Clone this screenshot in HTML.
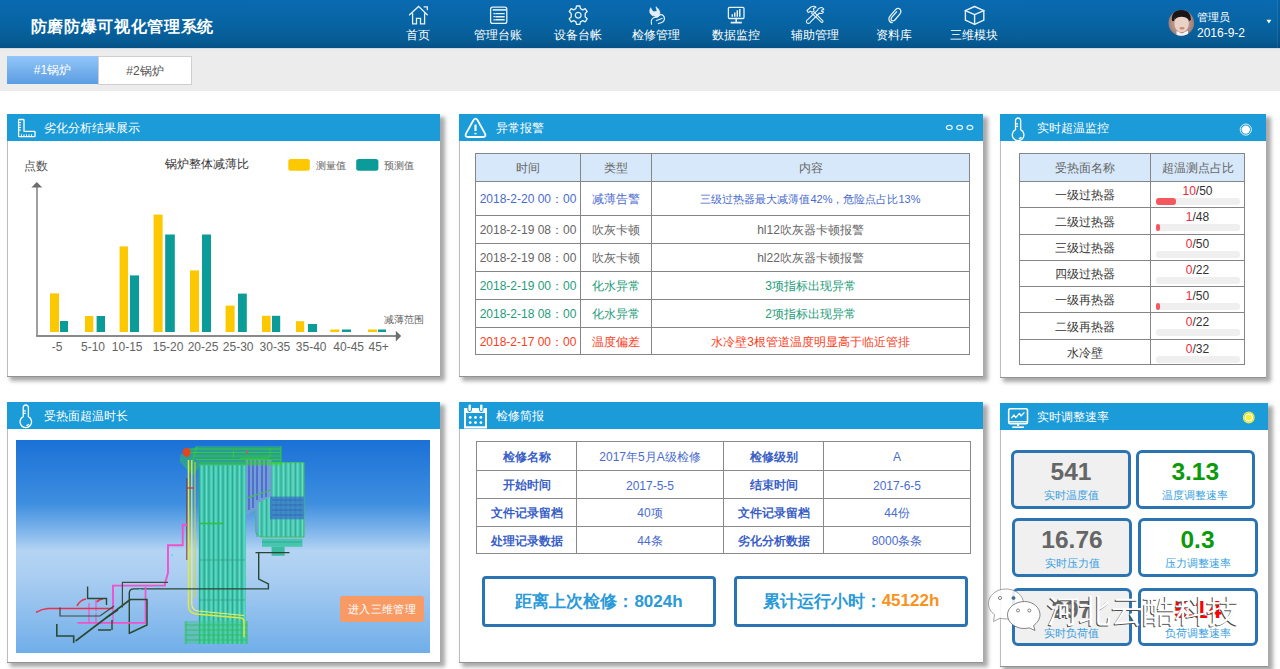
<!DOCTYPE html>
<html><head><meta charset="utf-8">
<style>
*{margin:0;padding:0;box-sizing:border-box}
html,body{width:1280px;height:669px;overflow:hidden;background:#fff;font-family:"Liberation Sans",sans-serif;}
.abs{position:absolute}
#hdr{position:absolute;left:0;top:0;width:1280px;height:48px;background:linear-gradient(#0a6ab0,#0764a3 50%,#075b93 85%,#065089);}
#title{position:absolute;left:30.5px;top:15px;font-size:16px;font-weight:bold;color:#fff;line-height:24px;letter-spacing:0.7px}
.nav{position:absolute;top:0;height:48px;width:80px;text-align:center;color:#fff;font-size:12px}
.nav svg{position:absolute;left:0;top:0}
.nav span{position:absolute;left:0;width:100%;top:27px;line-height:16px;white-space:nowrap}
#bar{position:absolute;left:0;top:48px;width:1280px;height:43px;background:#ececec;border-top:1px solid #d2dbe3}
.tab{position:absolute;top:56px;height:28px;font-size:12px;line-height:29px;text-align:center}
.panel{position:absolute;background:#fff;box-shadow:inset 1px 0 0 #bdbdbd,0 1px 0 #929292,4px 4px 4px 1px rgba(0,0,0,.34)}
.ph{position:absolute;left:0;top:0;width:100%;height:27px;background:#1b9bd7;color:#fff;font-size:12px;line-height:27px}
.ph .t{position:absolute;left:37px;top:1px}
.ph svg{position:absolute;left:0;top:0}
.cell{position:absolute;display:flex;align-items:center;justify-content:center;white-space:nowrap;font-size:12px;padding-top:2px}
</style></head><body>
<div id="hdr"></div>
<div id="title">防磨防爆可视化管理系统</div>
<svg class="abs" style="left:0;top:0" width="1280" height="48" viewBox="0 0 1280 48" fill="none" stroke="#e8f1f8" stroke-width="1.3" stroke-linecap="square">
 <!-- home -->
 <path d="M409.6 14.8 L418.6 6.4 L427.2 14.8 M412.6 14 V23.8 H416.5 V18.3 H420.5 V23.8 H424.6 V14 M424.3 6.8 H427.3 V9.6"/>
 <!-- ledger -->
 <rect x="490.6" y="7.2" width="16.2" height="16.2" rx="2"/>
 <path d="M493.5 9.9 H505.5" stroke-width="1.6"/>
 <path d="M496.2 13.6 H504 M496.2 16.7 H504 M496.2 19.8 H504" stroke-width="1.4"/>
 <path d="M494 13.6 h.8 M494 16.7 h.8 M494 19.8 h.8" stroke-width="1.2"/>
 <!-- gear -->
 <g transform="translate(578.2 15.2)">
  <path d="M-1.7 -9.2 L1.7 -9.2 L2.3 -6.6 L4.6 -5.4 L7.0 -6.6 L9.0 -3.6 L7.0 -1.8 L7.0 1.8 L9.0 3.6 L7.0 6.6 L4.6 5.4 L2.3 6.6 L1.7 9.2 L-1.7 9.2 L-2.3 6.6 L-4.6 5.4 L-7.0 6.6 L-9.0 3.6 L-7.0 1.8 L-7.0 -1.8 L-9.0 -3.6 L-7.0 -6.6 L-4.6 -5.4 L-2.3 -6.6 Z" stroke-linejoin="round"/>
  <circle r="2.9"/>
 </g>
 <!-- wrench hand -->
 <g stroke="#e4eef6">
  <path d="M650.5 8.2 C648.5 12 650.5 15.5 654.5 16 L657.2 17.5 L659.5 15.8 C660.5 12.5 659.5 9.5 656 6.8 L657 10.5 C656 12.2 653.8 12.2 652.5 11 Z" fill="#e4eef6" stroke-width="0.8"/>
  <path d="M651.5 24 C650.5 20 652 17.5 656 17.2 L660 14.8 C663 14.2 664.5 16.5 664.5 19 C664.3 21 662 22.8 658.5 23.5 M656.5 20.5 L662 18.5" stroke-width="1.2"/>
 </g>
 <!-- monitor -->
 <rect x="728.4" y="7.3" width="15.6" height="11.2" rx="1.2"/>
 <path d="M736.2 18.5 V21.5 M731.5 22.6 H741" stroke-width="1.6"/>
 <path d="M732.3 16 V15 M734.8 16 V13.3 M737.3 16 V11 M739.8 16 V9.8" stroke-width="1.5"/>
 <!-- tools -->
 <g stroke-width="1.1" stroke-linejoin="round">
  <path d="M807 10.5 L811 7 C812.8 6.2 815 6.2 816 7.2 L813.5 8.6 L814 10.8 L812.3 12.2 L810.4 11.2 L808.2 12.6 Z"/>
  <path d="M813.8 11.8 L818 16 L822.8 20.8 C823.4 21.6 822.6 22.8 821.6 22.4 L816 17.2 L811.6 13.2"/>
  <path d="M819.6 8 C821.4 6.8 823.6 7.8 823.8 9.6 L822 9.8 L821.6 11.4 L823.6 12 C822.6 13.6 820.6 14 819.4 13 L810.6 21.8 C810.2 23.4 808 23.8 806.8 22.8 C806 21.4 806.6 19.6 808.2 19.2 L817.6 10.2 C817.6 9.4 818.6 8.4 819.6 8 Z"/>
 </g>
 <!-- paperclip -->
 <path d="M896.5 11.8 L891.5 17.6 C890.4 19 891.2 20.8 892.8 20.9 C893.6 21 894.4 20.6 894.9 20 L900.2 13.6 C901.6 11.8 900.8 8.6 898.4 8.4 C897.2 8.3 896.2 8.9 895.6 9.6 L889.8 16.4 C888 18.6 888.8 22.4 892.2 22.6" stroke-linecap="round"/>
 <!-- cube -->
 <g stroke-width="1.4" stroke-linejoin="round">
  <path d="M974.6 6.5 L983.8 10.6 V20.2 L974.6 24.3 L965.4 20.2 V10.6 Z"/>
  <path d="M965.4 10.6 L974.6 14.6 L983.8 10.6 M974.6 14.6 V24.3"/>
 </g>
 <!-- triangle -->
 <path d="M1266.4 19.8 H1271.4 L1268.9 23.6 Z" fill="#fff" stroke="none"/>
</svg>
<div class="nav" style="left:378px"><span>首页</span></div>
<div class="nav" style="left:458px"><span>管理台账</span></div>
<div class="nav" style="left:537.5px"><span>设备台帐</span></div>
<div class="nav" style="left:616px"><span>检修管理</span></div>
<div class="nav" style="left:696px"><span>数据监控</span></div>
<div class="nav" style="left:774.7px"><span>辅助管理</span></div>
<div class="nav" style="left:854px"><span>资料库</span></div>
<div class="nav" style="left:933.5px"><span>三维模块</span></div>
<svg class="abs" style="left:1164px;top:6px" width="34" height="34" viewBox="1164 6 34 34">
 <defs><clipPath id="avc"><circle cx="1181.3" cy="22.9" r="12.8"/></clipPath>
 <radialGradient id="avbg" cx=".5" cy=".5" r=".5"><stop offset=".5" stop-color="#b8948a"/><stop offset="1" stop-color="#7e6660"/></radialGradient></defs>
 <g clip-path="url(#avc)">
  <rect x="1164" y="6" width="34" height="34" fill="url(#avbg)"/>
  <path d="M1172 21 Q1171 10 1181 9.5 Q1191 10 1191 20 L1189 21 Q1188 15 1181 15 Q1174.5 15 1174 21 Z" fill="#1a1618"/>
  <ellipse cx="1181.6" cy="23.6" rx="7.2" ry="8.6" fill="#ead2c6"/>
  <path d="M1174.5 20 Q1175 14.6 1181.5 14.6 Q1188.5 14.6 1189 20 Q1186 16.8 1181.5 16.8 Q1177 16.8 1174.5 20 Z" fill="#1a1618"/>
  <ellipse cx="1182" cy="28.2" rx="2.6" ry="1.2" fill="#c98a80"/>
  <path d="M1176.5 31 L1182 33.5 L1188 30.5 V40 H1176.5 Z" fill="#f4f6f8"/>
 </g>
</svg>
<div class="abs" style="left:1197px;top:10px;font-size:11px;line-height:14px;color:#fff">管理员</div>
<div class="abs" style="left:1197px;top:26px;font-size:12px;line-height:14px;color:#fff">2016-9-2</div>
<div class="abs" style="left:1277px;top:0;width:1px;height:48px;background:rgba(255,255,255,.08)"></div><div class="abs" style="left:1278px;top:0;width:2px;height:48px;background:rgba(0,0,0,.06)"></div>

<div id="bar"></div>
<div class="tab" style="left:7px;width:91px;background:linear-gradient(#92c6f9,#5b9de2);color:#fff">#1锅炉</div>
<div class="tab" style="left:98px;width:94px;height:29px;background:#fff;border:1px solid #cfcfcf;color:#555">#2锅炉</div>

<!-- panels -->
<div class="panel" style="left:7px;top:114px;width:433px;height:262px">
  <div class="ph"><span class="t">劣化分析结果展示</span></div>
</div>
<div class="panel" style="left:459px;top:114px;width:524px;height:262px">
  <div class="ph"><span class="t">异常报警</span></div>
</div>
<div class="panel" style="left:1000px;top:114px;width:266px;height:263px">
  <div class="ph"><span class="t">实时超温监控</span></div>
</div>
<div class="panel" style="left:7px;top:402px;width:433px;height:260px">
  <div class="ph"><span class="t">受热面超温时长</span></div>
</div>
<div class="panel" style="left:459px;top:402px;width:524px;height:260px">
  <div class="ph"><span class="t">检修简报</span></div>
</div>
<div class="panel" style="left:1000px;top:403px;width:268px;height:263px">
  <div class="ph"><span class="t">实时调整速率</span></div>
</div>
<svg class="abs" style="left:7px;top:141px" width="433" height="235" viewBox="7 141 433 235" font-family="Liberation Sans, sans-serif">
 <g font-size="12" fill="#555"><text x="23.5" y="170">点数</text></g>
 <text x="165" y="168" font-size="12" fill="#333">锅炉整体减薄比</text>
 <rect x="288.3" y="158.9" width="21.5" height="11.8" rx="2.5" fill="#fcc800"/>
 <rect x="356.2" y="158.9" width="22.2" height="11.8" rx="2.5" fill="#0b9b98"/>
 <g font-size="10" fill="#666"><text x="316" y="168.5">测量值</text><text x="383.6" y="168.5">预测值</text></g>
 <path d="M37 187 V336" stroke="#888" stroke-width="1.6"/>
 <path d="M36.8 182 L42.2 187.6 L31.4 187.6 Z" fill="#6d6d6d"/>
 <path d="M36.2 335.9 H396" stroke="#8a8a8a" stroke-width="2"/>
 <path d="M401.2 336 L395.8 330.8 V341.4 Z" fill="#6d6d6d"/>
 <rect x="50" y="293.4" width="9" height="38.6" fill="#fcc800"/>
 <rect x="60" y="321" width="8" height="11.0" fill="#0b9b98"/>
 <rect x="85" y="316" width="8.3" height="16.0" fill="#fcc800"/>
 <rect x="96.6" y="316" width="8.4" height="16.0" fill="#0b9b98"/>
 <rect x="119.6" y="246.4" width="8.4" height="85.6" fill="#fcc800"/>
 <rect x="130" y="275.4" width="9" height="56.6" fill="#0b9b98"/>
 <rect x="153.6" y="214.6" width="9" height="117.4" fill="#fcc800"/>
 <rect x="165.2" y="234.5" width="9.6" height="97.5" fill="#0b9b98"/>
 <rect x="190" y="270.4" width="9" height="61.6" fill="#fcc800"/>
 <rect x="202" y="234.5" width="9" height="97.5" fill="#0b9b98"/>
 <rect x="225.6" y="305.6" width="9" height="26.4" fill="#fcc800"/>
 <rect x="238" y="293.6" width="8.8" height="38.4" fill="#0b9b98"/>
 <rect x="262" y="315.8" width="8.6" height="16.2" fill="#fcc800"/>
 <rect x="272" y="315.8" width="8.2" height="16.2" fill="#0b9b98"/>
 <rect x="296" y="321.2" width="8.2" height="10.8" fill="#fcc800"/>
 <rect x="308" y="324" width="9" height="8.0" fill="#0b9b98"/>
 <rect x="330.3" y="329.5" width="9" height="2.5" fill="#fcc800"/>
 <rect x="342" y="329.5" width="9" height="2.5" fill="#0b9b98"/>
 <rect x="368" y="329.5" width="9" height="2.5" fill="#fcc800"/>
 <rect x="378" y="329.5" width="8" height="2.5" fill="#0b9b98"/>
 <g font-size="12" fill="#646464">
 <text x="57.2" y="350.8" text-anchor="middle">-5</text>
 <text x="93" y="350.8" text-anchor="middle">5-10</text>
 <text x="127.2" y="350.8" text-anchor="middle">10-15</text>
 <text x="168.1" y="350.8" text-anchor="middle">15-20</text>
 <text x="203" y="350.8" text-anchor="middle">20-25</text>
 <text x="238.2" y="350.8" text-anchor="middle">25-30</text>
 <text x="274.9" y="350.8" text-anchor="middle">30-35</text>
 <text x="311.2" y="350.8" text-anchor="middle">35-40</text>
 <text x="348.7" y="350.8" text-anchor="middle">40-45</text>
 <text x="378.7" y="350.8" text-anchor="middle">45+</text>
 </g>
 <text x="384.3" y="322.5" font-size="10" fill="#666">减薄范围</text>
</svg>
<!--P1END-->
<div class="abs" style="left:475px;top:153px;width:494px;height:28px;background:#d6e8f9"></div>
<div class="abs" style="left:475px;top:153px;width:495px;height:1px;background:#858585"></div>
<div class="abs" style="left:475px;top:181px;width:495px;height:1px;background:#858585"></div>
<div class="abs" style="left:475px;top:215px;width:495px;height:1px;background:#858585"></div>
<div class="abs" style="left:475px;top:243px;width:495px;height:1px;background:#858585"></div>
<div class="abs" style="left:475px;top:271px;width:495px;height:1px;background:#858585"></div>
<div class="abs" style="left:475px;top:299px;width:495px;height:1px;background:#858585"></div>
<div class="abs" style="left:475px;top:327px;width:495px;height:1px;background:#858585"></div>
<div class="abs" style="left:475px;top:354px;width:495px;height:1px;background:#858585"></div>
<div class="abs" style="left:475px;top:153px;width:1px;height:202px;background:#858585"></div>
<div class="abs" style="left:580px;top:153px;width:1px;height:202px;background:#858585"></div>
<div class="abs" style="left:651px;top:153px;width:1px;height:202px;background:#858585"></div>
<div class="abs" style="left:969px;top:153px;width:1px;height:202px;background:#858585"></div>
<div class="cell" style="left:476px;top:154px;width:104px;height:27px;color:#666">时间</div>
<div class="cell" style="left:581px;top:154px;width:70px;height:27px;color:#666">类型</div>
<div class="cell" style="left:652px;top:154px;width:317px;height:27px;color:#666">内容</div>
<div class="cell" style="left:476px;top:182px;width:104px;height:33px;color:#4a6bcf">2018-2-20 00：00</div>
<div class="cell" style="left:581px;top:182px;width:70px;height:33px;color:#4a6bcf">减薄告警</div>
<div class="cell" style="left:652px;top:182px;width:317px;height:33px;color:#4a6bcf;font-size:11px">三级过热器最大减薄值42%，危险点占比13%</div>
<div class="cell" style="left:476px;top:216px;width:104px;height:27px;color:#666">2018-2-19 08：00</div>
<div class="cell" style="left:581px;top:216px;width:70px;height:27px;color:#666">吹灰卡顿</div>
<div class="cell" style="left:652px;top:216px;width:317px;height:27px;color:#666;">hl12吹灰器卡顿报警</div>
<div class="cell" style="left:476px;top:244px;width:104px;height:27px;color:#666">2018-2-19 08：00</div>
<div class="cell" style="left:581px;top:244px;width:70px;height:27px;color:#666">吹灰卡顿</div>
<div class="cell" style="left:652px;top:244px;width:317px;height:27px;color:#666;">hl22吹灰器卡顿报警</div>
<div class="cell" style="left:476px;top:272px;width:104px;height:27px;color:#1f9c7a">2018-2-19 00：00</div>
<div class="cell" style="left:581px;top:272px;width:70px;height:27px;color:#1f9c7a">化水异常</div>
<div class="cell" style="left:652px;top:272px;width:317px;height:27px;color:#1f9c7a;">3项指标出现异常</div>
<div class="cell" style="left:476px;top:300px;width:104px;height:27px;color:#1f9c7a">2018-2-18 08：00</div>
<div class="cell" style="left:581px;top:300px;width:70px;height:27px;color:#1f9c7a">化水异常</div>
<div class="cell" style="left:652px;top:300px;width:317px;height:27px;color:#1f9c7a;">2项指标出现异常</div>
<div class="cell" style="left:476px;top:328px;width:104px;height:26px;color:#fb3d22">2018-2-17 00：00</div>
<div class="cell" style="left:581px;top:328px;width:70px;height:26px;color:#fb3d22">温度偏差</div>
<div class="cell" style="left:652px;top:328px;width:317px;height:26px;color:#fb3d22;">水冷壁3根管道温度明显高于临近管排</div>
<svg class="abs" style="left:940px;top:120px" width="40" height="16" viewBox="940 120 40 16" fill="none" stroke="#dff0fa" stroke-width="1.2"><ellipse cx="949.3" cy="127.5" rx="2.9" ry="2.2"/><ellipse cx="959.6" cy="127.5" rx="2.9" ry="2.2"/><ellipse cx="969.9" cy="127.5" rx="2.9" ry="2.2"/></svg>
<div class="abs" style="left:1019px;top:153px;width:225px;height:28px;background:#d6e8f9"></div>
<div class="abs" style="left:1019px;top:153px;width:226px;height:1px;background:#858585"></div>
<div class="abs" style="left:1019px;top:181px;width:226px;height:1px;background:#858585"></div>
<div class="abs" style="left:1019px;top:207px;width:226px;height:1px;background:#858585"></div>
<div class="abs" style="left:1019px;top:234px;width:226px;height:1px;background:#858585"></div>
<div class="abs" style="left:1019px;top:260px;width:226px;height:1px;background:#858585"></div>
<div class="abs" style="left:1019px;top:286px;width:226px;height:1px;background:#858585"></div>
<div class="abs" style="left:1019px;top:312px;width:226px;height:1px;background:#858585"></div>
<div class="abs" style="left:1019px;top:339px;width:226px;height:1px;background:#858585"></div>
<div class="abs" style="left:1019px;top:364px;width:226px;height:1px;background:#858585"></div>
<div class="abs" style="left:1019px;top:153px;width:1px;height:212px;background:#858585"></div>
<div class="abs" style="left:1150px;top:153px;width:1px;height:212px;background:#858585"></div>
<div class="abs" style="left:1244px;top:153px;width:1px;height:212px;background:#858585"></div>
<div class="cell" style="left:1020px;top:154px;width:130px;height:27px;color:#666">受热面名称</div>
<div class="cell" style="left:1151px;top:154px;width:93px;height:27px;color:#666">超温测点占比</div>
<div class="cell" style="left:1020px;top:182px;width:130px;height:25px;color:#333">一级过热器</div>
<div class="abs" style="left:1151px;top:184px;width:93px;height:14px;line-height:14px;text-align:center;font-size:12px;color:#333"><span style="color:#f0283c">10</span>/50</div>
<div class="abs" style="left:1156px;top:198px;width:84px;height:7px;border-radius:3px;background:#efefef"></div>
<div class="abs" style="left:1156px;top:198px;width:20px;height:7px;border-radius:3px;background:#f4585e"></div>
<div class="cell" style="left:1020px;top:208px;width:130px;height:26px;color:#333">二级过热器</div>
<div class="abs" style="left:1151px;top:210px;width:93px;height:14px;line-height:14px;text-align:center;font-size:12px;color:#333"><span style="color:#f0283c">1</span>/48</div>
<div class="abs" style="left:1156px;top:224px;width:84px;height:7px;border-radius:3px;background:#efefef"></div>
<div class="abs" style="left:1156px;top:224px;width:4px;height:7px;border-radius:3px;background:#f4585e"></div>
<div class="cell" style="left:1020px;top:235px;width:130px;height:25px;color:#333">三级过热器</div>
<div class="abs" style="left:1151px;top:237px;width:93px;height:14px;line-height:14px;text-align:center;font-size:12px;color:#333"><span style="color:#f0283c">0</span>/50</div>
<div class="abs" style="left:1156px;top:251px;width:84px;height:7px;border-radius:3px;background:#efefef"></div>
<div class="cell" style="left:1020px;top:261px;width:130px;height:25px;color:#333">四级过热器</div>
<div class="abs" style="left:1151px;top:263px;width:93px;height:14px;line-height:14px;text-align:center;font-size:12px;color:#333"><span style="color:#f0283c">0</span>/22</div>
<div class="abs" style="left:1156px;top:277px;width:84px;height:7px;border-radius:3px;background:#efefef"></div>
<div class="cell" style="left:1020px;top:287px;width:130px;height:25px;color:#333">一级再热器</div>
<div class="abs" style="left:1151px;top:289px;width:93px;height:14px;line-height:14px;text-align:center;font-size:12px;color:#333"><span style="color:#f0283c">1</span>/50</div>
<div class="abs" style="left:1156px;top:303px;width:84px;height:7px;border-radius:3px;background:#efefef"></div>
<div class="abs" style="left:1156px;top:303px;width:4px;height:7px;border-radius:3px;background:#f4585e"></div>
<div class="cell" style="left:1020px;top:313px;width:130px;height:26px;color:#333">二级再热器</div>
<div class="abs" style="left:1151px;top:315px;width:93px;height:14px;line-height:14px;text-align:center;font-size:12px;color:#333"><span style="color:#f0283c">0</span>/22</div>
<div class="abs" style="left:1156px;top:329px;width:84px;height:7px;border-radius:3px;background:#efefef"></div>
<div class="cell" style="left:1020px;top:340px;width:130px;height:24px;color:#333">水冷壁</div>
<div class="abs" style="left:1151px;top:342px;width:93px;height:14px;line-height:14px;text-align:center;font-size:12px;color:#333"><span style="color:#f0283c">0</span>/32</div>
<div class="abs" style="left:1156px;top:356px;width:84px;height:7px;border-radius:3px;background:#efefef"></div>
<svg class="abs" style="left:1236px;top:120px" width="20" height="20" viewBox="1236 120 20 20"><circle cx="1245.8" cy="129.6" r="5.6" fill="none" stroke="#eaf5fb" stroke-width="1"/><circle cx="1245.8" cy="129.6" r="4.2" fill="#fff"/></svg>
<!--P23END-->
<svg class="abs" style="left:0;top:0;pointer-events:none" width="1280" height="669" viewBox="0 0 1280 669" fill="none" stroke="#fff" stroke-width="1.3">
 <!-- ruler P1 -->
 <path d="M18.6 120.2 Q18.6 119.5 19.3 119.5 H23.3 Q24 119.5 24 120.2 V131.3 H34.4 Q35 131.3 35 132 V136.1 Q35 136.7 34.4 136.7 H19.3 Q18.6 136.7 18.6 136 Z" stroke-linejoin="round"/>
 <path d="M18.6 122.5 H21 M18.6 125 H21 M18.6 127.5 H21 M18.6 130 H21 M21.5 136.7 V134.3 M24 136.7 V134.3 M26.5 136.7 V134.3 M29 136.7 V134.3 M31.5 136.7 V134.3" stroke-width="1"/>
 <!-- warning P2 -->
 <path d="M473.4 120.2 Q475.5 117.2 477.6 120.2 L484.9 133.4 Q486.6 137 483 137 H468 Q464.4 137 466.1 133.4 Z" stroke-width="1.8" stroke-linejoin="round"/>
 <path d="M475.5 124.6 L475.5 131" stroke-width="2.2"/>
 <path d="M475.5 132.8 V134.4" stroke-width="2.1"/>
 <!-- thermometer P3 -->
 <path transform="translate(1018.1 118)" d="M-2.6 11.7 V2.6 A2.6 2.6 0 0 1 2.6 2.6 V11.7 A5.8 5.8 0 1 1 -2.6 11.7 Z M-2.6 5.8 H0 M-2.6 8.3 H0 M3.2 19.2 A3.6 3.6 0 0 1 0.6 20.6"/>
 <!-- thermometer P4 -->
 <path transform="translate(25.8 405)" d="M-2.6 11.7 V2.6 A2.6 2.6 0 0 1 2.6 2.6 V11.7 A5.8 5.8 0 1 1 -2.6 11.7 Z M-2.6 5.8 H0 M-2.6 8.3 H0 M3.2 19.2 A3.6 3.6 0 0 1 0.6 20.6"/>
 <!-- calendar P5 -->
 <path d="M464 408 H487 V428.4 H464 Z M466 413 V426.2 H485 V413 Z" fill="#fff" fill-rule="evenodd" stroke="none"/>
 <path d="M469.7 405.6 V409.8 M481.3 405.6 V409.8" stroke-width="4.6" stroke-linecap="round" stroke="#1b9bd7"/>
 <path d="M469.7 405.6 V409.8 M481.3 405.6 V409.8" stroke-width="2.4" stroke-linecap="round" stroke="#fff"/>
 <g fill="#fff" stroke="none"><circle cx="470.2" cy="417.4" r="1.4"/><circle cx="475.5" cy="417.4" r="1.4"/><circle cx="480.9" cy="417.4" r="1.4"/><circle cx="470.2" cy="422.6" r="1.4"/><circle cx="475.5" cy="422.6" r="1.4"/><circle cx="480.9" cy="422.6" r="1.4"/></g>
 <!-- monitor P6 -->
 <rect x="1008.7" y="408.8" width="18.8" height="15" rx="1.5" stroke-width="1.6"/>
 <path d="M1008.7 421.8 H1027.5" stroke-width="1.4"/>
 <path d="M1018.1 424 V426" stroke-width="2"/>
 <path d="M1012.3 427.2 H1024" stroke-width="1.6"/>
 <path d="M1011.3 418.2 L1014 415 L1015.8 417.6 L1019.4 413.4 L1021 416 L1024.4 412.4" stroke-width="1.3" stroke-linejoin="round"/>
 <!-- yellow dot P6 -->
 <circle cx="1248.8" cy="417.5" r="5.3" fill="#9cc850" stroke="#f2ee3a" stroke-width="1.2"/><circle cx="1248.8" cy="417.5" r="3.7" fill="#f8f030"/>
</svg>
<!--ICONSEND-->
<svg class="abs" style="left:16px;top:440px" width="414" height="213" viewBox="16 440 414 213">
 <defs><linearGradient id="sky" x1="0" y1="0" x2="0" y2="1">
  <stop offset="0" stop-color="#1a71d6"/><stop offset=".3" stop-color="#3f8fe0"/><stop offset=".44" stop-color="#86b9ec"/><stop offset=".52" stop-color="#b4d4f3"/><stop offset=".66" stop-color="#a8ccf1"/><stop offset="1" stop-color="#70aee9"/>
 </linearGradient></defs>
 <rect x="16" y="440" width="414" height="213" fill="url(#sky)"/>
 <!-- right module -->
 <path d="M255.5 462.6 H304 V537 H263 Q255.5 537 255.5 529 Z" fill="#48c9b2"/>
 <path d="M257.0 463 V537" stroke="#2e9f92" stroke-width="0.8"/><path d="M259.4 463 V537" stroke="#78e2cc" stroke-width="0.8"/><path d="M261.8 463 V537" stroke="#2e9f92" stroke-width="0.8"/><path d="M264.2 463 V537" stroke="#78e2cc" stroke-width="0.8"/><path d="M266.6 463 V537" stroke="#2e9f92" stroke-width="0.8"/><path d="M269.0 463 V537" stroke="#78e2cc" stroke-width="0.8"/><path d="M271.4 463 V537" stroke="#2e9f92" stroke-width="0.8"/><path d="M273.8 463 V537" stroke="#78e2cc" stroke-width="0.8"/><path d="M276.2 463 V537" stroke="#2e9f92" stroke-width="0.8"/><path d="M278.6 463 V537" stroke="#78e2cc" stroke-width="0.8"/><path d="M281.0 463 V537" stroke="#2e9f92" stroke-width="0.8"/><path d="M283.4 463 V537" stroke="#78e2cc" stroke-width="0.8"/><path d="M285.8 463 V537" stroke="#2e9f92" stroke-width="0.8"/><path d="M288.2 463 V537" stroke="#78e2cc" stroke-width="0.8"/><path d="M290.6 463 V537" stroke="#2e9f92" stroke-width="0.8"/><path d="M293.0 463 V537" stroke="#78e2cc" stroke-width="0.8"/><path d="M295.4 463 V537" stroke="#2e9f92" stroke-width="0.8"/><path d="M297.8 463 V537" stroke="#78e2cc" stroke-width="0.8"/><path d="M300.2 463 V537" stroke="#2e9f92" stroke-width="0.8"/><path d="M302.6 463 V537" stroke="#78e2cc" stroke-width="0.8"/>
 <path d="M255.5 462.6 H304 V537 H263 Q255.5 537 255.5 529 Z" fill="none" stroke="#3fbf5a" stroke-width="1"/>
 <rect x="270" y="496.6" width="34" height="22.7" fill="#3a78c8" opacity=".8"/>
 <path d="M272 500 H303 M272 505 H303 M272 510 H303 M272 515 H303" stroke="#2a55b0" stroke-width="0.8" opacity=".7"/>
 <path d="M262 538.7 H302.4 V546.8 H262 Z" fill="#45c7ac"/>
 <path d="M262 542 H302" stroke="#2fa090" stroke-width=".8"/>
 <path d="M271.6 546.8 H284.6 V555.8 H271.6 Z" fill="#3bbba0"/>
 <!-- middle blue tubes -->
 <path d="M245.8 459 H271.6 V496 L258 503 V533 H255.5 V510 L245.8 516 Z" fill="#6ea0d6"/>
 <path d="M249 460 V510 M253 460 V508 M257 460 V500 M262 460 V498 M266 460 V497" stroke="#4c58cc" stroke-width="1.4"/>
 <path d="M247 498 L271 490" stroke="#3fbf5a" stroke-width="1.2"/>
 <!-- main column -->
 <rect x="198.8" y="464.5" width="47" height="179.5" fill="#44c9b1"/>
 <path d="M199.5 465 V644" stroke="#2aa592" stroke-width="1.1"/><path d="M201.8 465 V644" stroke="#6ee0c8" stroke-width="0.9"/><path d="M204.2 465 V644" stroke="#2aa592" stroke-width="1.1"/><path d="M206.6 465 V644" stroke="#6ee0c8" stroke-width="0.9"/><path d="M208.9 465 V644" stroke="#2aa592" stroke-width="1.1"/><path d="M211.2 465 V644" stroke="#6ee0c8" stroke-width="0.9"/><path d="M213.6 465 V644" stroke="#2aa592" stroke-width="1.1"/><path d="M215.9 465 V644" stroke="#6ee0c8" stroke-width="0.9"/><path d="M218.3 465 V644" stroke="#2aa592" stroke-width="1.1"/><path d="M220.7 465 V644" stroke="#6ee0c8" stroke-width="0.9"/><path d="M223.0 465 V644" stroke="#2aa592" stroke-width="1.1"/><path d="M225.3 465 V644" stroke="#6ee0c8" stroke-width="0.9"/><path d="M227.7 465 V644" stroke="#2aa592" stroke-width="1.1"/><path d="M230.1 465 V644" stroke="#6ee0c8" stroke-width="0.9"/><path d="M232.4 465 V644" stroke="#2aa592" stroke-width="1.1"/><path d="M234.8 465 V644" stroke="#6ee0c8" stroke-width="0.9"/><path d="M237.1 465 V644" stroke="#2aa592" stroke-width="1.1"/><path d="M239.4 465 V644" stroke="#6ee0c8" stroke-width="0.9"/><path d="M241.8 465 V644" stroke="#2aa592" stroke-width="1.1"/><path d="M244.2 465 V644" stroke="#6ee0c8" stroke-width="0.9"/>
 <path d="M199 523.5 H223.5" stroke="#30c040" stroke-width="1.6"/>
 <path d="M199 560 H245 M199 600 H245" stroke="#2e9e80" stroke-width="0.7"/>
 <!-- top frame wireframe -->
 <path d="M180 455 L197 446 H281 V466 H200 L193 476 L180 462 Z" fill="#3cd040" opacity=".42"/>
 <path d="M187 449 H281 M190 452.5 H281 M193 456 H281 M196 459.5 H281 M199 463 H281 M197 446 L190 470 M281 446 V466 M233.5 451 V458 M270 447.5 V456 Q270 458 266 458 H240" stroke="#30d030" stroke-width=".9" fill="none"/>
 <circle cx="247" cy="452" r="1.2" fill="#e05050"/>
 <!-- bottom base wireframe -->
 <path d="M184.3 621 H247.4 V644 H184.3 Z" fill="#40c88a" opacity=".45"/>
 <path d="M185 625 H247 M185 630 H247 M185 635 H247 M185 640 H247 M186 621 V644 M247 621 V644" stroke="#2fbf50" stroke-width="0.8" fill="none"/>
 <!-- yellow pipes -->
 <path d="M188.5 460 V606 Q188.5 613 196 614 L241 618 Q244 618.5 244 622 V637" stroke="#e0e83a" stroke-width="1.5" fill="none"/>
 <path d="M191.8 460 V604 Q191.8 610 198 611 L244 615.5" stroke="#eef05a" stroke-width="1.2" fill="none"/>
 <path d="M195 462 V598" stroke="#c8dc30" stroke-width="1" fill="none"/>
 <path d="M186.8 478 V560" stroke="#8a3a30" stroke-width="1" fill="none"/>
 <path d="M186.8 488 H194" stroke="#d03030" stroke-width="1.2"/>
 <ellipse cx="186.6" cy="452.3" rx="3.9" ry="4.6" fill="#e8441c"/>
 <!-- dark frame under hopper -->
 <path d="M129.3 634 V593 Q129.3 588.9 134 588.9 H268.4 V584 L258.7 579 V552.6 H255.5 L289.5 552.6" stroke="#2a4632" stroke-width="1.4" fill="none"/>
 <!-- magenta pipes -->
 <path d="M187.5 524.8 H182.7 V545.2 H168 V572.7 L164.9 584 V585.6 H113 V608" stroke="#f052cc" stroke-width="1.9" fill="none"/>
 <path d="M77.5 622.8 H145.5 V587" stroke="#f052cc" stroke-width="1.7" fill="none"/>
 <path d="M89 622 V603 M96 622 V600 M113 608 V622" stroke="#f052cc" stroke-width="1.2" fill="none"/>
 <!-- red pipe -->
 <path d="M36 612.4 Q42 609 48 608.6 H113 M77 606 Q80 600 86 599 M97 602 Q99 599 103 599" stroke="#e8304e" stroke-width="1.5" fill="none"/>
 <!-- dark green pipes -->
 <path d="M130 599.5 H147 V625 L130 633" stroke="#2b4a32" stroke-width="1.5" fill="none"/>
 <path d="M75.6 641 L130.3 599.5" stroke="#2b4a32" stroke-width="1.6" fill="none"/>
 <path d="M56.8 624 V636 H73.7 V643" stroke="#2b4a32" stroke-width="1.6" fill="none"/>
 <path d="M87.6 586.6 V598.5 H106.5 V605" stroke="#2b4a32" stroke-width="1.4" fill="none"/>
 <path d="M60 607.5 V616 H100 L114 606 M122.4 607.5 V582.4 H168" stroke="#3d4a3e" stroke-width="1.2" fill="none"/>
 <path d="M98 630 H111 M106 618 L118 610 M112 630 V620" stroke="#2b4a32" stroke-width="1.4" fill="none"/>
 <g fill="#40e8f0"><circle cx="78" cy="620" r="1.1"/><circle cx="96" cy="612" r="1.1"/><circle cx="172" cy="555" r="1.1"/><circle cx="119" cy="619" r="1.1"/><circle cx="185" cy="538" r="1.1"/><circle cx="158" cy="587" r="1.1"/><circle cx="140" cy="590" r="1.1"/></g>
</svg>
<div class="abs" style="left:340px;top:595.5px;width:84px;height:26px;border-radius:3px;background:#f79a64;color:#fff;font-size:11px;letter-spacing:0.3px;line-height:26px;text-align:center">进入三维管理</div>
<!--P4END-->
<div class="abs" style="left:476px;top:441px;width:495px;height:1px;background:#8a8a8a"></div>
<div class="abs" style="left:476px;top:470px;width:495px;height:1px;background:#8a8a8a"></div>
<div class="abs" style="left:476px;top:498px;width:495px;height:1px;background:#8a8a8a"></div>
<div class="abs" style="left:476px;top:526px;width:495px;height:1px;background:#8a8a8a"></div>
<div class="abs" style="left:476px;top:553px;width:495px;height:1px;background:#8a8a8a"></div>
<div class="abs" style="left:476px;top:441px;width:1px;height:113px;background:#8a8a8a"></div>
<div class="abs" style="left:576px;top:441px;width:1px;height:113px;background:#8a8a8a"></div>
<div class="abs" style="left:723px;top:441px;width:1px;height:113px;background:#8a8a8a"></div>
<div class="abs" style="left:823px;top:441px;width:1px;height:113px;background:#8a8a8a"></div>
<div class="abs" style="left:970px;top:441px;width:1px;height:113px;background:#8a8a8a"></div>
<div class="cell" style="left:477px;top:442px;width:99px;height:28px;color:#3b5fc6;font-weight:bold">检修名称</div>
<div class="cell" style="left:577px;top:442px;width:146px;height:28px;color:#4b6ccf">2017年5月A级检修</div>
<div class="cell" style="left:724px;top:442px;width:99px;height:28px;color:#3b5fc6;font-weight:bold">检修级别</div>
<div class="cell" style="left:824px;top:442px;width:146px;height:28px;color:#4b6ccf">A</div>
<div class="cell" style="left:477px;top:471px;width:99px;height:27px;color:#3b5fc6;font-weight:bold">开始时间</div>
<div class="cell" style="left:577px;top:471px;width:146px;height:27px;color:#4b6ccf">2017-5-5</div>
<div class="cell" style="left:724px;top:471px;width:99px;height:27px;color:#3b5fc6;font-weight:bold">结束时间</div>
<div class="cell" style="left:824px;top:471px;width:146px;height:27px;color:#4b6ccf">2017-6-5</div>
<div class="cell" style="left:477px;top:499px;width:99px;height:27px;color:#3b5fc6;font-weight:bold">文件记录留档</div>
<div class="cell" style="left:577px;top:499px;width:146px;height:27px;color:#4b6ccf">40项</div>
<div class="cell" style="left:724px;top:499px;width:99px;height:27px;color:#3b5fc6;font-weight:bold">文件记录留档</div>
<div class="cell" style="left:824px;top:499px;width:146px;height:27px;color:#4b6ccf">44份</div>
<div class="cell" style="left:477px;top:527px;width:99px;height:26px;color:#3b5fc6;font-weight:bold">处理记录数据</div>
<div class="cell" style="left:577px;top:527px;width:146px;height:26px;color:#4b6ccf">44条</div>
<div class="cell" style="left:724px;top:527px;width:99px;height:26px;color:#3b5fc6;font-weight:bold">劣化分析数据</div>
<div class="cell" style="left:824px;top:527px;width:146px;height:26px;color:#4b6ccf">8000条条</div>
<div class="abs" style="left:482px;top:575.5px;width:234px;height:51px;border:3px solid #2a74b4;border-radius:4px;display:flex;align-items:center;justify-content:center;font-size:17px;font-weight:bold;color:#2a9ad8;white-space:nowrap">距离上次检修：8024h</div>
<div class="abs" style="left:734px;top:575.5px;width:234px;height:51px;border:3px solid #2a74b4;border-radius:4px;display:flex;align-items:center;justify-content:center;font-size:17px;font-weight:bold;color:#2a9ad8;white-space:nowrap">累计运行小时：<span style="color:#f7931e">45122h</span></div>
<div class="abs" style="left:1011px;top:449.5px;width:120px;height:59.0px;border:3px solid #2b73b1;border-radius:6px;background:#f0f0f0"><div class="abs" style="left:0;width:100%;top:6px;text-align:center;font-size:24.5px;line-height:26px;font-weight:bold;color:#666">541</div><div class="abs" style="left:0;width:100%;top:35px;text-align:center;font-size:11px;line-height:14px;color:#3a9fe0">实时温度值</div></div>
<div class="abs" style="left:1135.5px;top:449.5px;width:119.5px;height:59.0px;border:3px solid #2b73b1;border-radius:6px;background:#fff"><div class="abs" style="left:0;width:100%;top:6px;text-align:center;font-size:24.5px;line-height:26px;font-weight:bold;color:#0b9a0b">3.13</div><div class="abs" style="left:0;width:100%;top:35px;text-align:center;font-size:11px;line-height:14px;color:#3a9fe0">温度调整速率</div></div>
<div class="abs" style="left:1012px;top:518px;width:120px;height:58.5px;border:3px solid #2b73b1;border-radius:6px;background:#f0f0f0"><div class="abs" style="left:0;width:100%;top:6px;text-align:center;font-size:24.5px;line-height:26px;font-weight:bold;color:#666">16.76</div><div class="abs" style="left:0;width:100%;top:35px;text-align:center;font-size:11px;line-height:14px;color:#3a9fe0">实时压力值</div></div>
<div class="abs" style="left:1137.5px;top:518px;width:120.0px;height:58.5px;border:3px solid #2b73b1;border-radius:6px;background:#fff"><div class="abs" style="left:0;width:100%;top:6px;text-align:center;font-size:24.5px;line-height:26px;font-weight:bold;color:#0b9a0b">0.3</div><div class="abs" style="left:0;width:100%;top:35px;text-align:center;font-size:11px;line-height:14px;color:#3a9fe0">压力调整速率</div></div>
<div class="abs" style="left:1012px;top:587.5px;width:119.5px;height:58.0px;border:3px solid #2b73b1;border-radius:6px;background:#f0f0f0"><div class="abs" style="left:0;width:100%;top:6px;text-align:center;font-size:24.5px;line-height:26px;font-weight:bold;color:#666">297</div><div class="abs" style="left:0;width:100%;top:35px;text-align:center;font-size:11px;line-height:14px;color:#3a9fe0">实时负荷值</div></div>
<div class="abs" style="left:1138px;top:587.5px;width:119.5px;height:58.0px;border:3px solid #2b73b1;border-radius:6px;background:#fff"><div class="abs" style="left:0;width:100%;top:6px;text-align:center;font-size:24.5px;line-height:26px;font-weight:bold;color:#f00">5.14</div><div class="abs" style="left:0;width:100%;top:35px;text-align:center;font-size:11px;line-height:14px;color:#3a9fe0">负荷调整速率</div></div>
<svg class="abs" style="left:984px;top:584px" width="60" height="52" viewBox="984 584 60 52">
 <path d="M1006 589 C996 589 988.5 595.5 988.5 603.5 C988.5 608 990.8 612 994.5 614.6 L993.5 621.5 L1000 618.2 C1002 618.6 1003.7 619 1006 619 C1015.7 619 1023.5 611.5 1023.5 603.5 C1023.5 595.5 1015.7 589 1006 589 Z" fill="#fff" fill-opacity=".88" stroke="#777" stroke-opacity=".75" stroke-width=".9"/>
 <circle cx="1000" cy="598" r="1.6" fill="#fff" stroke="#666" stroke-width=".8"/><circle cx="1013.5" cy="598" r="1.6" fill="#1f6fb0" stroke="#555" stroke-width=".6"/>
 <path d="M1024.5 601.5 C1015.5 601.5 1007.5 607.4 1007.5 614.8 C1007.5 622.2 1015 628.5 1024 628.5 C1025.8 628.5 1027.6 628.3 1029.2 627.8 L1035 630.5 L1033.6 625.5 C1037 623 1040 619.2 1040 614.8 C1040 607.4 1033 601.5 1024.5 601.5 Z" fill="#fff" fill-opacity=".97" stroke="#555" stroke-opacity=".8" stroke-width=".9"/>
 <circle cx="1018" cy="610.5" r="1.5" fill="#fff" stroke="#666" stroke-width=".8"/><circle cx="1029.3" cy="610.5" r="1.5" fill="#fff" stroke="#666" stroke-width=".8"/>
</svg>
<div class="abs" style="left:1047px;top:593px;font-size:31.5px;line-height:36px;font-weight:500;color:#fff;white-space:nowrap;text-shadow:-1px 1px 0 #4a4a4a">河北云酷科技</div>
<!--P56END-->
</body></html>
